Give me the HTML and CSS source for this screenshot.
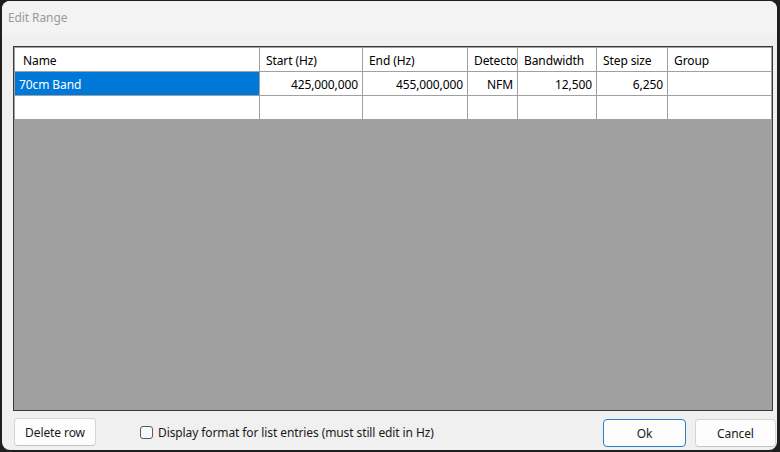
FILE: index.html
```html
<!DOCTYPE html>
<html lang="en">
<head>
<meta charset="utf-8">
<title>Edit Range</title>
<link rel="stylesheet" href="styles.css">
</head>
<body>
<div class="window">
  <div class="titlebar">Edit Range</div>
  <div class="content">
    <div class="grid">
      <div class="grid-inner">
        <div class="row header">
          <div class="cell first">Name</div>
          <div class="cell">Start (Hz)</div>
          <div class="cell">End (Hz)</div>
          <div class="cell">Detector</div>
          <div class="cell">Bandwidth</div>
          <div class="cell">Step size</div>
          <div class="cell last">Group</div>
        </div>
        <div class="row">
          <div class="cell selected">70cm Band</div>
          <div class="cell num">425,000,000</div>
          <div class="cell num">455,000,000</div>
          <div class="cell num">NFM</div>
          <div class="cell num">12,500</div>
          <div class="cell num">6,250</div>
          <div class="cell last"></div>
        </div>
        <div class="row">
          <div class="cell"></div>
          <div class="cell"></div>
          <div class="cell"></div>
          <div class="cell"></div>
          <div class="cell"></div>
          <div class="cell"></div>
          <div class="cell last"></div>
        </div>
        <div class="empty"></div>
      </div>
    </div>
    <div class="footer">
      <button class="btn delete">Delete row</button>
      <label class="check"><span class="box"></span>Display format for list entries (must still edit in Hz)</label>
      <div class="spacer"></div>
      <button class="btn ok">Ok</button>
      <button class="btn cancel">Cancel</button>
    </div>
  </div>
</div>
</body>
</html>
```

FILE: styles.css
```css
* { box-sizing: border-box; }
html, body {
  margin: 0;
  padding: 0;
  width: 780px;
  height: 452px;
  overflow: hidden;
  background: #1f1f1f;
  font-family: "Noto Sans", "Open Sans", sans-serif;
  font-size: 12px;
  letter-spacing: -0.1px;
  color: #000;
}
.window {
  margin: 1px 3px 0 2px;
  height: 449px;
  background: #f0f0f0;
  border-radius: 8px;
  display: flex;
  flex-direction: column;
  overflow: hidden;
}
.titlebar {
  height: 34px;
  line-height: 34px;
  padding-left: 6px;
  color: #9a9a9a;
  background: #f3f3f3;
}
.content {
  flex: 1;
  display: flex;
  flex-direction: column;
  padding: 11px 1px 0 11px;
}
.grid {
  height: 365px;
  width: 760px;
  border: 1px solid #3a3a3a;
}
.grid-inner {
  height: 100%;
  border: 1px solid #a0a0a0;
  display: flex;
  flex-direction: column;
  background: #a0a0a0;
}
.row {
  display: grid;
  grid-template-columns: 245px 103px 105px 50px 79px 71px 1fr;
  height: 24px;
  background: #fff;
}
.cell {
  border-right: 1px solid #a0a0a0;
  border-bottom: 1px solid #a0a0a0;
  padding: 2px 4px 0 4px;
  line-height: 21px;
  white-space: nowrap;
  overflow: hidden;
}
.header .cell { padding-left: 6px; }
.header .cell.first { padding-left: 8px; }
.cell.last { border-right: none; }
.cell.num { text-align: right; }
.cell.selected {
  background: #0078d7;
  color: #fff;
}
.empty { flex: 1; background: #a0a0a0; }
.footer {
  display: flex;
  align-items: center;
  margin-top: 7px;
  height: 28px;
}
.btn {
  font-family: inherit;
  font-size: 12px;
  letter-spacing: -0.1px;
  color: #1a1a1a;
  background: #fdfdfd;
  border: 1px solid #d5d5d5;
  border-bottom-color: #c4c4c4;
  border-radius: 4px;
  height: 28px;
  padding: 0;
}
.delete { width: 82px; margin-left: 1px; }
.check {
  display: flex;
  align-items: center;
  margin-left: 44px;
  color: #1a1a1a;
}
.box {
  width: 13px;
  height: 13px;
  border: 1px solid #5a5a5a;
  border-radius: 3px;
  background: #f8f8f8;
  margin-right: 5px;
}
.spacer { flex: 1; }
.ok {
  width: 83px;
  border-color: #2a7fd1;
  margin-top: 2px;
}
.cancel {
  width: 81px;
  margin-left: 9px;
  margin-top: 2px;
}
```
